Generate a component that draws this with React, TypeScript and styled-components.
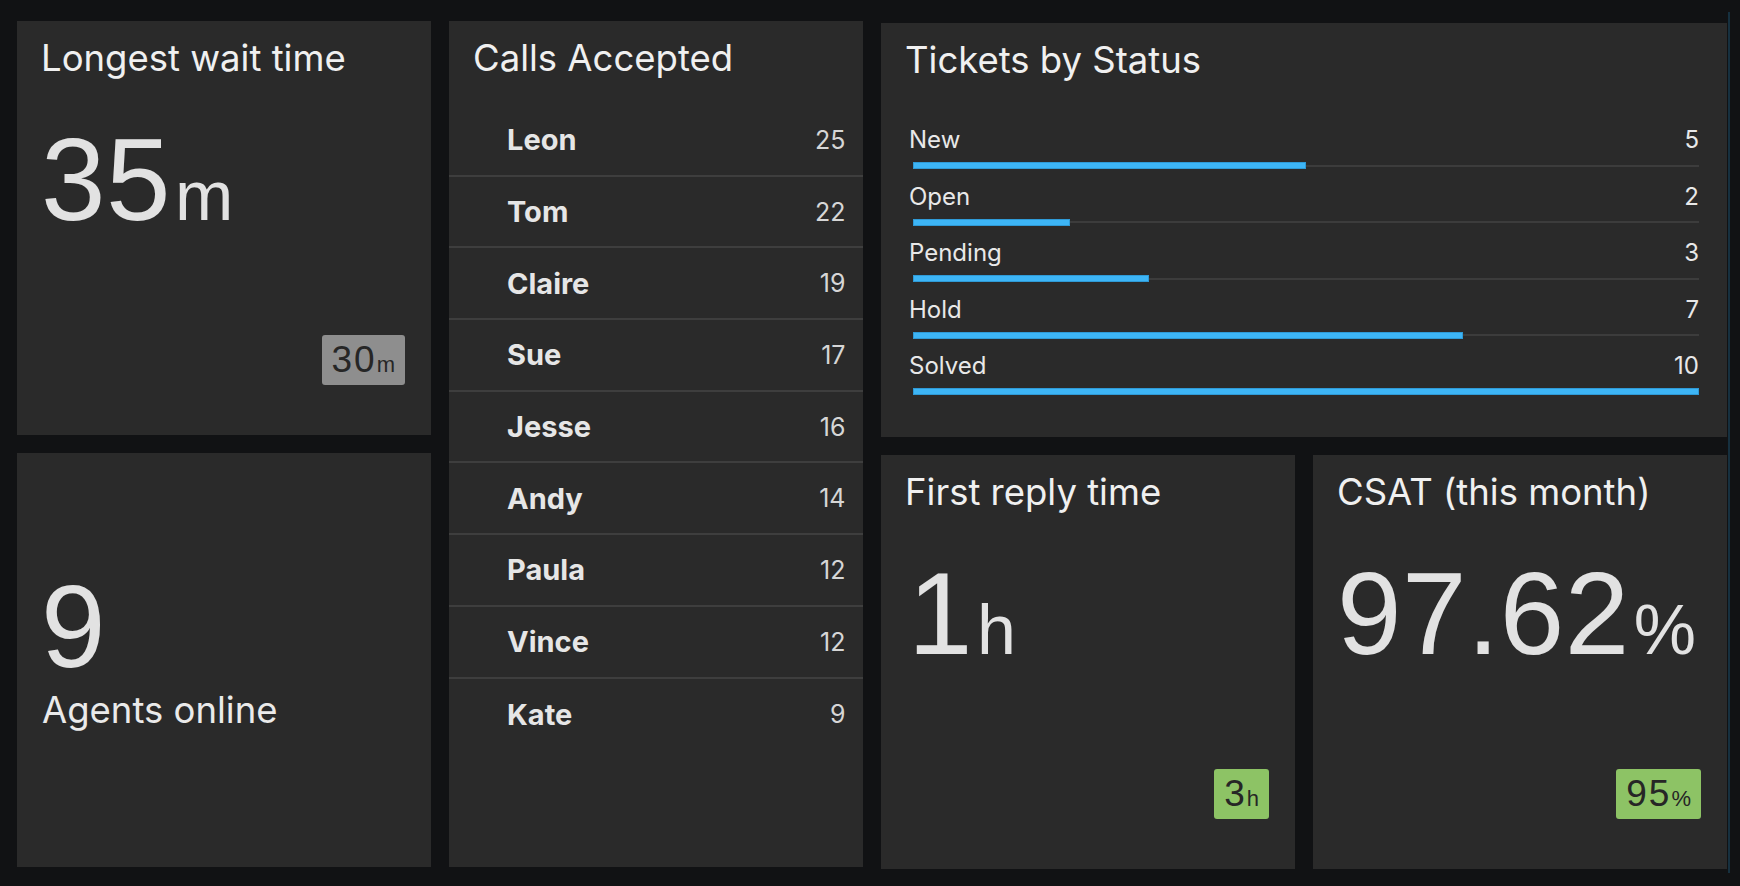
import React from "react";
import styled, { createGlobalStyle } from "styled-components";

const GlobalStyle = createGlobalStyle`
  html, body { margin: 0; padding: 0; background: #111214; }
  body {
    width: 1740px;
    height: 886px;
    overflow: hidden;
    font-family: Inter, "Liberation Sans", sans-serif;
    -webkit-font-smoothing: antialiased;
  }
`;

const Dashboard = styled.main`
  box-sizing: border-box;
  width: 1740px;
  height: 886px;
  display: flex;
  align-items: flex-start;
  gap: 18px;
  padding: 21px 0 0 17px;
`;

const Column = styled.div`
  display: flex;
  flex-direction: column;
  gap: 18px;
  width: 414px;
`;

const WideColumn = styled.div`
  display: flex;
  flex-direction: column;
  gap: 18px;
  margin-top: -9px;
  padding: 11px 1px 4px 0;
  border-right: 2px solid #16303f;
`;

const BottomRow = styled.div`
  display: flex;
  gap: 18px;
`;

const Card = styled.section<{ $w?: number; $h?: number }>`
  box-sizing: border-box;
  width: ${(p) => p.$w ?? 414}px;
  height: ${(p) => p.$h ?? 414}px;
  background: #2a2a2a;
  display: flex;
  flex-direction: column;
  padding: 15px 26px 50px 24px;
  color: #eeeeee;
`;

const ListCard = styled(Card)`
  padding: 15px 0 0 0;
`;

const TicketsCard = styled(Card)`
  padding: 15px 28px 0 24px;
`;

const AgentsCard = styled(Card)`
  padding-top: 116px;
`;

const CardTitle = styled.h2<{ $indent?: number }>`
  margin: 0;
  padding-left: ${(p) => p.$indent ?? 0}px;
  font-family: Inter, "Liberation Sans", sans-serif;
  font-size: 36.5px;
  line-height: 44px;
  font-weight: 400;
  color: #f0f0f0;
  white-space: nowrap;
`;

const BigValue = styled.div<{ $top?: number; $shift?: number }>`
  margin-top: ${(p) => p.$top ?? 42}px;
  padding-left: ${(p) => p.$shift ?? 0}px;
  display: flex;
  align-items: baseline;
  font-family: "Liberation Sans", Arial, sans-serif;
  font-size: 116px;
  line-height: 116px;
  letter-spacing: 0.5px;
  color: #e2e2e2;
  white-space: nowrap;
`;

const Unit = styled.span`
  font-size: 70px;
  letter-spacing: 0;
  margin-left: 4px;
`;

const Caption = styled.div`
  margin-top: 3px;
  font-family: Inter, "Liberation Sans", sans-serif;
  font-size: 36.5px;
  line-height: 44px;
  color: #eaeaea;
  padding-left: 1px;
`;

const Badge = styled.div<{ $bg: string }>`
  margin-top: auto;
  align-self: flex-end;
  display: inline-flex;
  align-items: baseline;
  box-sizing: border-box;
  height: 50px;
  padding: 0 10px;
  border-radius: 3px;
  background: ${(p) => p.$bg};
  color: #262626;
  font-family: "Liberation Sans", Arial, sans-serif;
  font-size: 37px;
  letter-spacing: 2px;
  line-height: 50px;
`;

const BadgeUnit = styled.span`
  font-size: 22px;
  letter-spacing: 0;
`;

const AgentList = styled.ul`
  list-style: none;
  margin: 25px 0 0 0;
  padding: 0;
`;

const AgentRow = styled.li`
  box-sizing: border-box;
  height: 71.7px;
  display: flex;
  align-items: center;
  justify-content: space-between;
  padding: 0 17.5px 0 58px;
  border-bottom: 2px solid #3e3e3e;
  &:last-child {
    border-bottom: none;
  }
`;

const AgentName = styled.span`
  font-family: Inter, "Liberation Sans", sans-serif;
  font-weight: 700;
  font-size: 29px;
  color: #e6e6e6;
`;

const AgentCount = styled.span`
  font-family: Inter, "Liberation Sans", sans-serif;
  font-weight: 400;
  font-size: 25px;
  color: #d6d6d6;
`;

const StatusList = styled.div`
  margin-top: 43px;
  padding-left: 4px;
  display: flex;
  flex-direction: column;
`;

const StatusRow = styled.div`
  height: 56.5px;
  display: flex;
  flex-direction: column;
`;

const StatusHead = styled.div`
  display: flex;
  justify-content: space-between;
  font-family: Inter, "Liberation Sans", sans-serif;
  font-size: 24px;
  line-height: 30px;
  color: #e8e8e8;
`;

const Track = styled.div`
  position: relative;
  height: 7px;
  margin: 7px 0 0 4px;
  &::before {
    content: "";
    position: absolute;
    left: 0;
    right: 0;
    top: 2.5px;
    height: 2px;
    background: #3c3c3c;
  }
`;

const Fill = styled.div`
  position: relative;
  height: 7px;
  background: #3db5f6;
  box-shadow: inset 0 0 0 1px #2f9ad6;
`;

const agents: [string, number][] = [
  ["Leon", 25],
  ["Tom", 22],
  ["Claire", 19],
  ["Sue", 17],
  ["Jesse", 16],
  ["Andy", 14],
  ["Paula", 12],
  ["Vince", 12],
  ["Kate", 9],
];

const statuses: [string, number][] = [
  ["New", 5],
  ["Open", 2],
  ["Pending", 3],
  ["Hold", 7],
  ["Solved", 10],
];

const maxStatus = Math.max(...statuses.map((s) => s[1]));

export default function App() {
  return (
    <>
      <GlobalStyle />
      <Dashboard>
        <Column>
          <Card>
            <CardTitle>Longest wait time</CardTitle>
            <BigValue>
              35<Unit>m</Unit>
            </BigValue>
            <Badge $bg="#8e8e8e">
              30<BadgeUnit>m</BadgeUnit>
            </Badge>
          </Card>
          <AgentsCard>
            <BigValue $top={0}>9</BigValue>
            <Caption>Agents online</Caption>
          </AgentsCard>
        </Column>

        <ListCard $h={846}>
          <CardTitle $indent={24}>Calls Accepted</CardTitle>
          <AgentList>
            {agents.map(([name, n]) => (
              <AgentRow key={name}>
                <AgentName>{name}</AgentName>
                <AgentCount>{n}</AgentCount>
              </AgentRow>
            ))}
          </AgentList>
        </ListCard>

        <WideColumn>
          <TicketsCard $w={846}>
            <CardTitle>Tickets by Status</CardTitle>
            <StatusList>
              {statuses.map(([label, n]) => (
                <StatusRow key={label}>
                  <StatusHead>
                    <span>{label}</span>
                    <span>{n}</span>
                  </StatusHead>
                  <Track>
                    <Fill style={{ width: `${(n / maxStatus) * 100}%` }} />
                  </Track>
                </StatusRow>
              ))}
            </StatusList>
          </TicketsCard>
          <BottomRow>
            <Card>
              <CardTitle>First reply time</CardTitle>
              <BigValue $shift={3}>
                1<Unit>h</Unit>
              </BigValue>
              <Badge $bg="#8dc365">
                3<BadgeUnit>h</BadgeUnit>
              </Badge>
            </Card>
            <Card>
              <CardTitle>CSAT (this month)</CardTitle>
              <BigValue>
                97.62<Unit>%</Unit>
              </BigValue>
              <Badge $bg="#8dc365">
                95<BadgeUnit>%</BadgeUnit>
              </Badge>
            </Card>
          </BottomRow>
        </WideColumn>
      </Dashboard>
    </>
  );
}
